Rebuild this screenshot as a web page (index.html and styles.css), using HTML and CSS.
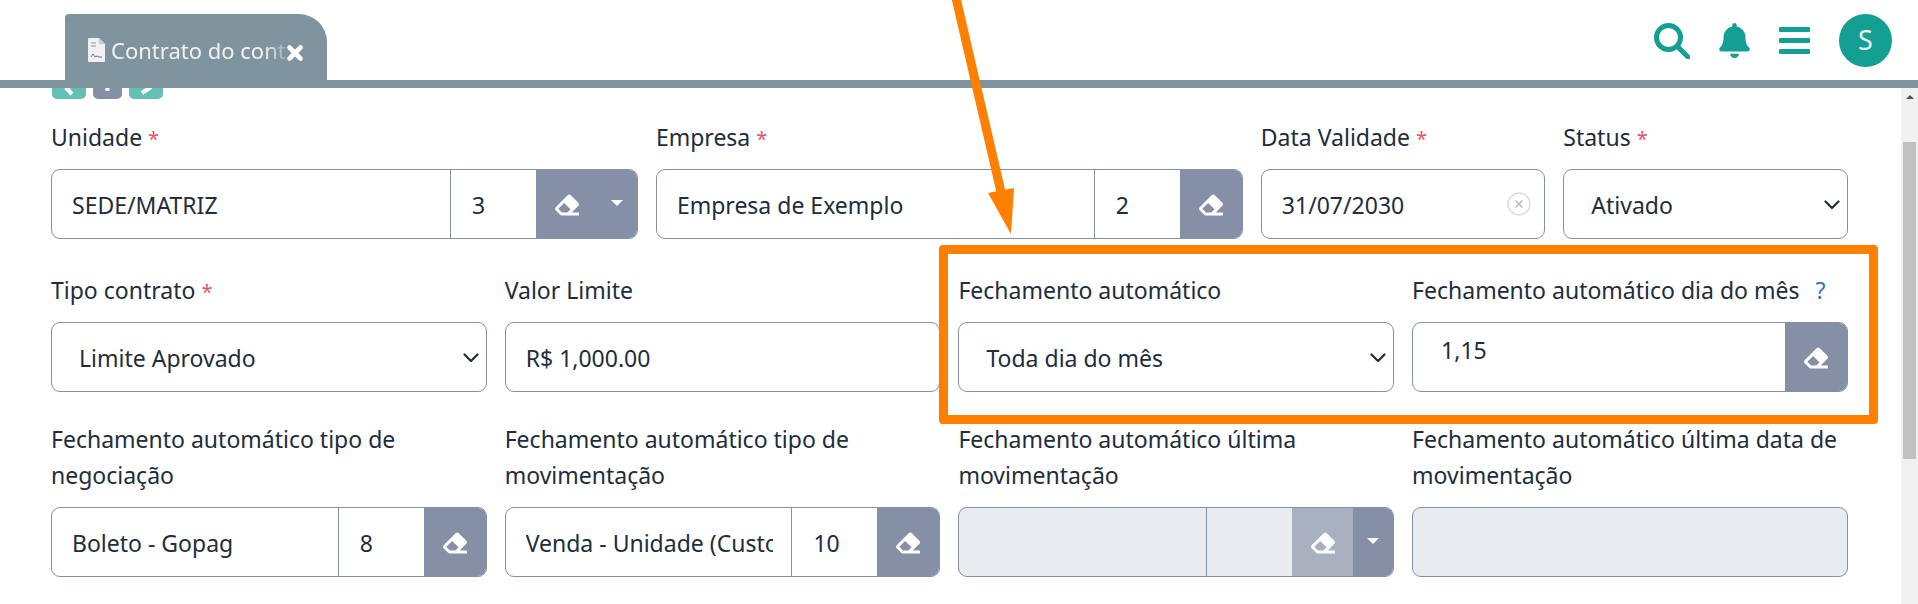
FILE: index.html
```html
<!DOCTYPE html>
<html lang="pt-BR">
<head>
<meta charset="utf-8">
<title>Contrato do contrato</title>
<link rel="stylesheet" href="styles.css">
</head>
<body>
<svg width="0" height="0" class="defs" aria-hidden="true">
  <symbol id="eraser" viewBox="0 0 512 512"><path fill="currentColor" d="M497.941 273.941c18.745-18.745 18.745-49.137 0-67.882l-160-160c-18.745-18.745-49.137-18.745-67.882 0l-256 256c-18.745 18.745-18.745 49.137 0 67.882l96 96A48.004 48.004 0 0 0 144 480h356c6.627 0 12-5.373 12-12v-40c0-6.627-5.373-12-12-12H355.883l142.058-142.059zm-302.627-62.627l137.373 137.373L265.373 416H150.628l-80-80 124.686-124.686z"/></symbol>
  <symbol id="chev" viewBox="0 0 16 10"><path d="M1.5 1.5 8 8l6.5-6.5" fill="none" stroke="#212d3a" stroke-width="2.2" stroke-linecap="round" stroke-linejoin="round"/></symbol>
</svg>

<header class="topbar">
  <div class="tab">
    <svg class="doc" viewBox="0 0 17 24"><path d="M1 0h10l6 6v17a1 1 0 0 1-1 1H1a1 1 0 0 1-1-1V1a1 1 0 0 1 1-1z" fill="#f1f1f3"/><path d="M11 0l6 6h-6z" fill="#b9cdf0"/><path d="M3 5h5M3 8h5" stroke="#8a95a5" stroke-width="1"/><path d="M3 19l2-3 2 3 2-1 2 1 3 0" fill="none" stroke="#6d7785" stroke-width="1"/></svg>
    <span class="tab-title">Contrato do cont</span>
    <svg class="tab-close" viewBox="0 0 18 18"><path d="M3.5 3.5l11 11M14.5 3.5l-11 11" stroke="#fff" stroke-width="4.6" stroke-linecap="round"/></svg>
  </div>
  <div class="actions">
    <svg class="ic-search" viewBox="0 0 36 36"><circle cx="14.5" cy="14.5" r="12" fill="none" stroke="#139f92" stroke-width="5"/><path d="M24 24l10 10" stroke="#139f92" stroke-width="5" stroke-linecap="round"/></svg>
    <svg class="ic-bell" viewBox="0 0 448 512"><path fill="#139f92" d="M224 512c35.32 0 63.97-28.65 63.97-64H160.03c0 35.35 28.65 64 63.97 64zm215.39-149.71c-19.32-20.76-55.47-51.99-55.47-154.29 0-77.7-54.48-139.9-127.94-155.16V32c0-17.67-14.32-32-31.98-32s-31.98 14.33-31.98 32v20.84C118.56 68.1 64.08 130.3 64.08 208c0 102.3-36.15 133.53-55.47 154.29-6 6.45-8.66 14.16-8.61 21.71.11 16.4 12.98 32 32.1 32h383.8c19.12 0 32-15.6 32.1-32 .05-7.55-2.61-15.27-8.61-21.71z"/></svg>
    <div class="ic-bars"><i></i><i></i><i></i></div>
    <div class="avatar">S</div>
  </div>
</header>

<div class="body-row">
  <main class="content">
    <div class="mini-buttons">
      <span class="mini teal wide"><svg viewBox="0 0 34 34"><path d="M20 19l-5 5 5 5" fill="none" stroke="#fff" stroke-width="4"/></svg></span>
      <span class="mini slate"><svg viewBox="0 0 29 34"><rect x="12.500" y="22" width="4" height="4" fill="#fff"/></svg></span>
      <span class="mini teal wide"><svg viewBox="0 0 34 34"><path d="M13 28l9-6" fill="none" stroke="#fff" stroke-width="4"/></svg></span>
    </div>

    <section class="row row-first">
      <div class="field s4">
        <label class="lbl">Unidade <b>*</b></label>
        <div class="group">
          <div class="cell grow pad20">SEDE/MATRIZ</div>
          <div class="cell code">3</div>
          <div class="btn"><svg class="er"><use href="#eraser"/></svg></div>
          <div class="btn caret-btn"><i class="caret"></i></div>
        </div>
      </div>
      <div class="field s4">
        <label class="lbl">Empresa <b>*</b></label>
        <div class="group">
          <div class="cell grow pad20">Empresa de Exemplo</div>
          <div class="cell code">2</div>
          <div class="btn"><svg class="er"><use href="#eraser"/></svg></div>
        </div>
      </div>
      <div class="field s2">
        <label class="lbl">Data Validade <b>*</b></label>
        <div class="group">
          <div class="cell grow pad20">31/07/2030</div>
          <svg class="clear" viewBox="0 0 24 24"><circle cx="12" cy="12" r="11" fill="none" stroke="#dcdcdc" stroke-width="1.500"/><path d="M8.500 8.500l7 7M15.500 8.500l-7 7" stroke="#b5b5b5" stroke-width="1.400"/></svg>
        </div>
      </div>
      <div class="field s2">
        <label class="lbl">Status <b>*</b></label>
        <div class="group select">Ativado<svg class="chev"><use href="#chev"/></svg></div>
      </div>
    </section>

    <section class="row">
      <div class="field s3">
        <label class="lbl">Tipo contrato <b>*</b></label>
        <div class="group select">Limite Aprovado<svg class="chev"><use href="#chev"/></svg></div>
      </div>
      <div class="field s3">
        <label class="lbl">Valor Limite</label>
        <div class="group"><div class="cell grow pad20">R$ 1,000.00</div></div>
      </div>
      <div class="field s3">
        <label class="lbl">Fechamento automático</label>
        <div class="group select">Toda dia do mês<svg class="chev"><use href="#chev"/></svg></div>
      </div>
      <div class="field s3">
        <label class="lbl lbl-help">Fechamento automático dia do mês <em>?</em></label>
        <div class="group">
          <div class="cell grow tag-cell"><span class="tag">1,15</span></div>
          <div class="btn"><svg class="er"><use href="#eraser"/></svg></div>
        </div>
      </div>
    </section>

    <section class="row">
      <div class="field s3">
        <label class="lbl">Fechamento automático tipo de negociação</label>
        <div class="group">
          <div class="cell grow pad20">Boleto - Gopag</div>
          <div class="cell code">8</div>
          <div class="btn"><svg class="er"><use href="#eraser"/></svg></div>
        </div>
      </div>
      <div class="field s3">
        <label class="lbl">Fechamento automático tipo de movimentação</label>
        <div class="group">
          <div class="cell grow pad20"><span class="clip">Venda - Unidade (Custo</span></div>
          <div class="cell code">10</div>
          <div class="btn"><svg class="er"><use href="#eraser"/></svg></div>
        </div>
      </div>
      <div class="field s3">
        <label class="lbl">Fechamento automático última movimentação</label>
        <div class="group disabled">
          <div class="cell grow"></div>
          <div class="cell code code-dis"></div>
          <div class="btn btn-dis"><svg class="er"><use href="#eraser"/></svg></div>
          <div class="btn caret-btn"><i class="caret"></i></div>
        </div>
      </div>
      <div class="field s3">
        <label class="lbl">Fechamento automático última data de movimentação</label>
        <div class="group disabled"><div class="cell grow"></div></div>
      </div>
    </section>
  </main>
  <aside class="scrollbar">
    <i class="arrow-up"></i>
    <div class="thumb"></div>
  </aside>
</div>

<div class="callout"></div>
<svg class="pointer" viewBox="0 0 1918 604" aria-hidden="true">
  <path d="M956 -2 1001 192" stroke="#ff8000" stroke-width="9" fill="none"/>
  <polygon points="988,193 1014,188 1011,234" fill="#ff8000"/>
</svg>
</body>
</html>
```

FILE: styles.css
```css
* { box-sizing: border-box; }
html, body { margin: 0; height: 604px; overflow: hidden; background: #fff; }
body {
  font-family: "Noto Sans", "Open Sans", sans-serif;
  font-size: 23px;
  line-height: 36px;
  color: #212d3a;
  position: relative;
}
.defs { position: absolute; }

.topbar {
  height: 88px;
  border-bottom: 8px solid #7f949e;
  display: flex;
  align-items: center;
  justify-content: space-between;
  padding: 0 26px 0 65px;
  position: relative;
  z-index: 2;
  background: #fff;
}
.tab {
  align-self: flex-end;
  width: 262px;
  height: 74px;
  margin-bottom: -8px;
  background: #7f949e;
  border-radius: 4px 28px 0 0;
  display: flex;
  align-items: center;
  padding: 0 0 3px 23px;
  color: #f1f1f1;
  position: relative;
}
.doc { width: 17px; height: 24px; flex: none; margin-top: 0; }
.tab-title {
  margin-left: 6px;
  width: 175px;
  flex: none;
  font-size: 22px;
  white-space: nowrap;
  -webkit-mask-image: linear-gradient(to right, #000 88%, rgba(0, 0, 0, .25) 100%);
  mask-image: linear-gradient(to right, #000 88%, rgba(0, 0, 0, .25) 100%);
}
.tab-close { width: 18px; height: 18px; flex: none; margin: 6px 0 0 0; }
.actions { display: flex; align-items: center; gap: 29px; }
.ic-search { width: 36px; height: 36px; margin-top: 1px; }
.ic-bell { width: 31px; height: 35px; margin-top: 1px; }
.ic-bars { width: 31px; display: flex; flex-direction: column; gap: 6px; }
.ic-bars i { display: block; height: 5px; background: #139f92; border-radius: 1px; }
.avatar {
  width: 53px; height: 53px; border-radius: 50%;
  background: #139f92; color: #eef5f4;
  display: flex; align-items: center; justify-content: center;
  font-size: 27px;
}

.body-row { display: flex; height: 516px; overflow: hidden; }
.content { flex: 1; min-width: 0; padding: 0 53.25px 0 51px; }
.mini-buttons { display: flex; gap: 7px; margin: -23px 0 20px 1px; height: 34px; }
.mini { display: block; height: 34px; width: 29px; border-radius: 5px; }
.mini.wide { width: 34px; }
.mini svg { display: block; width: 100%; height: 100%; }
.teal { background: #64c0b5; }
.slate { background: #8590a6; }

.row {
  display: grid;
  grid-template-columns: repeat(12, 1fr);
  column-gap: 18px;
  margin-bottom: 29px;
}
.row-first { margin-bottom: 33px; }
.field { min-width: 0; display: flex; flex-direction: column; justify-content: flex-end; }
.s2 { grid-column: span 2; }
.s3 { grid-column: span 3; }
.s4 { grid-column: span 4; }
.lbl { display: block; margin-bottom: 14px; }
.lbl b { font-weight: 400; font-size: 20px; line-height: 1; color: #e8506e; }
.lbl em { font-style: normal; color: #3b6fc4; margin-left: 10px; }

.group {
  height: 70px;
  border: 1px solid #8590a6;
  border-radius: 9px;
  display: flex;
  align-items: stretch;
  overflow: hidden;
  background: #fff;
  position: relative;
}
.cell { display: flex; align-items: center; min-width: 0; white-space: nowrap; padding-top: 2px; }
.grow { flex: 1; }
.pad20 { padding-left: 20px; }
.clip { display: block; overflow: hidden; width: 247px; }
.code { width: 86px; flex: none; padding-left: 21px; border-left: 1px solid #8590a6; }
.tag-cell { padding: 0 0 14px 28px; }
.btn {
  width: 62px; flex: none;
  background: #8590a6;
  color: #fff;
  display: flex; align-items: center; justify-content: center;
}
.er { width: 24px; height: 24px; margin-top: 1px; }
.caret-btn { width: 40px; margin-left: -1px; }
.caret { display: block; width: 0; height: 0; border: 6px solid transparent; border-top-color: #fff; border-bottom: 0; margin-top: -3px; }
.select { align-items: center; padding: 2px 0 0 27px; }
.chev { position: absolute; right: 7px; top: 30px; width: 16px; height: 10px; }
.clear { position: absolute; right: 13px; top: 22px; width: 24px; height: 24px; }
.disabled { background: #e9ecef; }
.code-dis { flex: none; }
.btn-dis { background: #a9b1c0; }

.scrollbar { width: 17px; flex: none; background: #f1f1f1; position: relative; display: flex; flex-direction: column; align-items: center; padding-top: 7px; }
.arrow-up { display: block; width: 0; height: 0; border: 4px solid transparent; border-bottom: 4px solid #505050; border-top: 0; }
.thumb { position: absolute; left: 2px; right: 2px; top: 54px; height: 317px; background: #c1c1c1; }

.callout {
  position: absolute;
  left: 939px; top: 245px;
  width: 939px; height: 179px;
  border: 9px solid #ff8000;
  border-radius: 4px;
  z-index: 3;
}
.pointer { position: absolute; left: 0; top: 0; width: 1918px; height: 604px; z-index: 3; pointer-events: none; }
```
